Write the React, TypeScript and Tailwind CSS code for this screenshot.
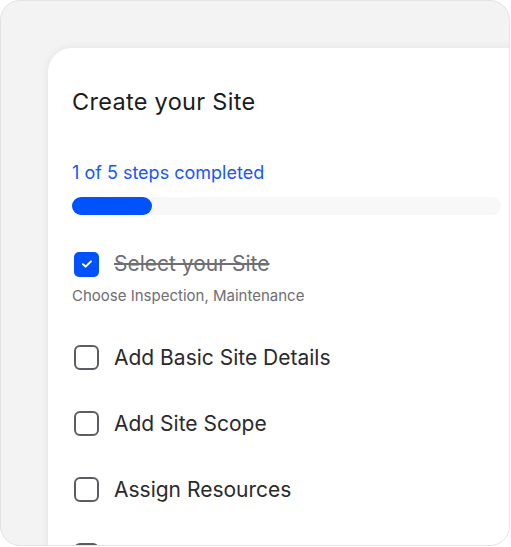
import React from "react";

function Box({ checked }: { checked?: boolean }) {
  if (checked) {
    return (
      <div className="w-[25px] h-[25px] rounded-[5px] bg-[#0052ff] flex items-center justify-center shrink-0">
        <svg width="12" height="10" viewBox="0 0 12 10" fill="none">
          <path d="M2 5.2 L4.6 7.6 L10 2.4" stroke="white" strokeWidth="2" strokeLinecap="round" strokeLinejoin="round" />
        </svg>
      </div>
    );
  }
  return <div className="w-[25px] h-[25px] rounded-[6px] border-2 border-[#5c5c66] shrink-0" />;
}

export default function App() {
  const items = ["Add Basic Site Details", "Add Site Scope", "Assign Resources"];
  return (
    <div className="w-[511px] h-[547px] bg-white" style={{ fontFamily: "Inter, 'Noto Sans', sans-serif" }}>
      <div className="w-[510px] h-[546px] rounded-[20px] border border-[#e3e3e3] bg-[#f3f3f3] overflow-hidden pl-[47px] pt-[47px]">
        <div className="w-[520px] h-[600px] bg-white rounded-tl-[24px] shadow-[0_0_10px_rgba(0,0,0,0.07)] pl-[24px] pt-[39px]">
          <h1 className="text-[23.5px] leading-[30px] text-[#1c1c1c] tracking-[0.3px]">Create your Site</h1>
          <div className="mt-[45px] text-[18px] leading-[22px] text-[#1656ff]">1 of 5 steps completed</div>
          <div className="mt-[13px] w-[429px] h-[18px] rounded-full bg-[#f8f8f8]">
            <div className="w-[80px] h-[18px] rounded-full bg-[#0052ff]" />
          </div>
          <div className="mt-[36px] flex items-center gap-[15px] pl-[2px]">
            <Box checked />
            <span className="text-[21px] leading-[26px] text-[#6e6e73] line-through decoration-[1.5px]">Select your Site</span>
          </div>
          <div className="mt-[10px] text-[15px] leading-[18px] text-[#6e6e73]">Choose Inspection, Maintenance</div>
          <div className="mt-[40px] flex flex-col gap-[41px] pl-[2px]">
            {items.map((t) => (
              <div key={t} className="flex items-center gap-[15px] h-[25px]">
                <Box />
                <span className="text-[21px] leading-[26px] text-[#2a2a2e]">{t}</span>
              </div>
            ))}
            <div className="flex items-center gap-[15px] h-[25px]">
              <Box />
            </div>
          </div>
        </div>
      </div>
    </div>
  );
}
